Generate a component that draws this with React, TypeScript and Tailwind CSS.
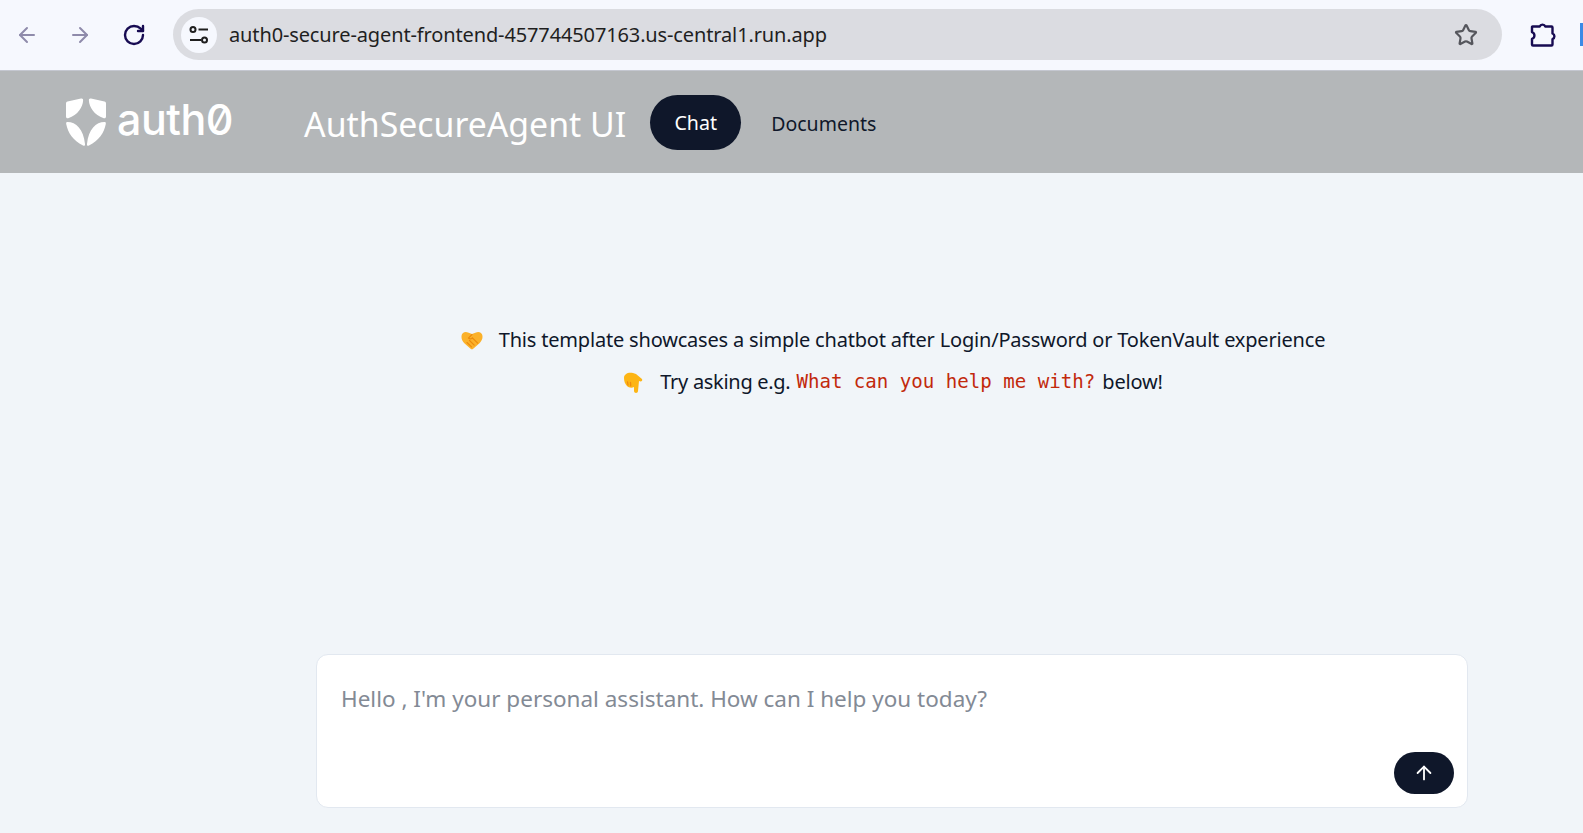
import { ArrowLeft, ArrowRight, ArrowUp, RotateCw, Star } from 'lucide-react';

const uiFont = "font-['Noto_Sans','Open_Sans',sans-serif]";

const TuneIcon = () => (
  <svg aria-hidden="true" className="h-[22px] w-[22px] text-[#1f1f1f]" fill="none" stroke="currentColor" strokeWidth="2" viewBox="0 0 22 22">
    <circle cx="5" cy="5.5" r="2.5" />
    <path d="M10.5 5.5H20" />
    <circle cx="16.5" cy="16" r="2.5" />
    <path d="M2 16h11" />
  </svg>
);

const PuzzleIcon = () => (
  <svg aria-hidden="true" className="h-[26px] w-[26px] text-[#170b52]" fill="none" stroke="currentColor" strokeLinejoin="round" strokeWidth="2.4" viewBox="0 0 26 26">
    <path d="M2.5 4.500h7.200a3 3 0 0 1 5.600 0h6.200a1 1 0 0 1 1 1v6a3 3 0 0 1 0 5.600v5.400a1 1 0 0 1-1 1H3a1 1 0 0 1-1-1v-5.600a3.600 3.600 0 0 0 0-6.800V5a.5.5 0 0 1 .5-.5Z" />
  </svg>
);

const AuthLogo = () => (
  <svg aria-hidden="true" className="h-[48px] w-[40px] text-white" fill="currentColor" viewBox="0 0 40 48">
    <path d="M1.500 3.500 15 .6c1.500-.3 2.200.4 2.100 1.900C16.800 9 12 17 2.200 20.200 1 20.600 0 20 0 18.500V5.500c0-1 .5-1.700 1.500-2Z" />
    <path d="M38.500 3.500 25 .6c-1.500-.3-2.200.4-2.100 1.900C23.200 9 28 17 37.800 20.200c1.200.4 2.200-.2 2.200-1.700V5.500c0-1-.5-1.700-1.500-2Z" />
    <path d="M1.500 24C10 24 17.500 31 19 46c.2 1.600-.7 2.300-2 1.500C7 42.500 2 35 .2 26c-.2-1.300.3-2 1.300-2Z" />
    <path d="M38.500 24C30 24 22.500 31 21 46c-.2 1.600.7 2.300 2 1.500C33 42.500 38 35 39.800 26c.2-1.300-.3-2-1.300-2Z" />
  </svg>
);

const HandshakeEmoji = () => (
  <svg aria-hidden="true" className="h-[22px] w-[22px]" viewBox="0 0 22 22">
    <path d="M.5 7C.8 3.500 4.500 2 7 3.500L11 5l4-1.500C17.500 2 21.200 3.500 21.500 7c.3 3-1.300 5.500-3 7.300l-6.300 5.500c-.8.7-1.800.7-2.600 0l-6-5.300C1.700 12.500.2 10 .5 7Z" fill="#fbb12a" />
    <path d="M11 5.500 7.500 9c1.200 1.200 2.500 1 3.800-.2l5.400 5.400M6 13.500l4.500 4.300M8.500 11.500l4.700 4.700" fill="none" stroke="#ec8a0c" strokeLinecap="round" strokeWidth="1.100" />
  </svg>
);

const PointDownEmoji = () => (
  <svg aria-hidden="true" className="h-[23px] w-[21px]" viewBox="0 0 21 23">
    <path d="M1 7C1 3 5 1 10 2l3 1 6 5c1 2-1 3-3 2l-1 10c0 2.500-4 2.500-4 0v-4c-2 1-5 1-7-1-2-2-3-5-3-8Z" fill="#fdb515" />
    <path d="M4.500 11 5 14M7.500 11.500l.2 3.300" fill="none" stroke="#ef8b10" strokeLinecap="round" strokeWidth="1.300" />
  </svg>
);

const BrowserBar = () => (
  <div className={`flex h-[71px] shrink-0 items-start overflow-hidden border-b border-[#c4c7d0] bg-[#f6f8fe] pt-[9px] ${uiFont}`}>
    <div className="flex h-[51px] w-[173px] shrink-0 items-center pl-[15px]">
      <ArrowLeft className="h-[24px] w-[24px] text-[#8f8bab]" strokeWidth={2} />
      <ArrowRight className="ml-[29px] h-[24px] w-[24px] text-[#8f8bab]" strokeWidth={2} />
      <RotateCw className="ml-[30px] h-[24px] w-[24px] text-[#170b52]" strokeWidth={2.4} />
    </div>
    <div className="flex h-[51px] w-[1329px] shrink-0 items-center rounded-full bg-[#dbdce1] pl-[8px] pr-[24px]">
      <span className="flex h-[36px] w-[36px] shrink-0 items-center justify-center rounded-full bg-[#f6f8fe]">
        <TuneIcon />
      </span>
      <span className="ml-[12px] flex-1 whitespace-nowrap text-[20px] tracking-[-0.13px] text-[#1f1f1f]">
        auth0-secure-agent-frontend-457744507163.us-central1.run.app
      </span>
      <Star className="h-[24px] w-[24px] text-[#55565c]" strokeWidth={2.2} />
    </div>
    <div className="ml-[28px] flex h-[51px] shrink-0 items-center">
      <PuzzleIcon />
    </div>
    <div className="ml-[24px] mt-[14px] h-[23px] w-[3px] shrink-0 bg-[#3b8ae6]" />
  </div>
);

const Header = () => (
  <header className={`flex h-[102px] shrink-0 items-center bg-[#b4b7b9] pl-[66px] ${uiFont}`}>
    <AuthLogo />
    <span className="ml-[11px] mt-[-6px] font-['Inter',sans-serif] text-[43px] font-medium leading-none tracking-[-0.5px] text-white slashed-zero">
      auth0
    </span>
    <h1 className="ml-[71px] mt-[5px] whitespace-nowrap text-[33.800px] font-normal leading-none text-white">AuthSecureAgent UI</h1>
    <nav className="ml-[24px] flex items-center">
      <a className="flex h-[55px] w-[91px] items-center justify-center rounded-full bg-[#0f172a] pt-[2px] text-[19.600px] text-white">Chat</a>
      <a className="ml-[30px] pt-[3px] text-[19.500px] text-[#0f172a]">Documents</a>
    </nav>
  </header>
);

const Intro = () => (
  <div className={`ml-[203px] flex flex-col items-center gap-[14px] pt-[153px] text-[20px] leading-[28px] tracking-[-0.19px] text-[#0f172a] ${uiFont}`}>
    <p className="flex items-center whitespace-nowrap">
      <HandshakeEmoji />
      <span className="ml-[16px]">This template showcases a simple chatbot after Login/Password or TokenVault experience</span>
    </p>
    <p className="flex items-center whitespace-nowrap">
      <PointDownEmoji />
      <span className="ml-[16px] tracking-[-0.3px]">Try asking e.g.</span>
      <code className="ml-[6px] font-['DejaVu_Sans_Mono',monospace] text-[19.100px] tracking-normal text-[#c2290c]">What can you help me with?</code>
      <span className="ml-[7px]">below!</span>
    </p>
  </div>
);

const Composer = () => (
  <form className={`ml-[316px] flex h-[154px] w-[1152px] flex-col rounded-[12px] border border-[#e2e8f0] bg-white pb-[13px] pl-[24px] pr-[13px] pt-[28px] ${uiFont}`}>
    <p className="text-[22.500px] leading-[32px] text-[#838a95]">Hello , I&apos;m your personal assistant. How can I help you today?</p>
    <button className="mt-auto flex h-[42px] w-[60px] items-center justify-center self-end rounded-full bg-[#0f172a]" type="button">
      <ArrowUp className="h-[22px] w-[22px] text-white" strokeWidth={2} />
    </button>
  </form>
);

export default function App() {
  return (
    <div className="flex h-[833px] w-full flex-col overflow-hidden bg-[#f1f5f9]">
      <BrowserBar />
      <Header />
      <main className="flex flex-1 flex-col justify-between pb-[25px]">
        <Intro />
        <Composer />
      </main>
    </div>
  );
}
